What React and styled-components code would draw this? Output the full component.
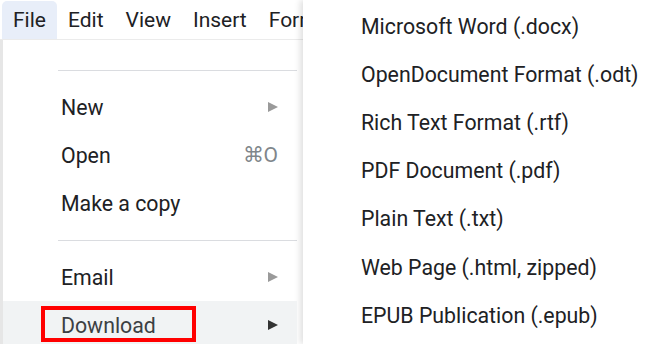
import React from 'react';
import styled, { createGlobalStyle } from 'styled-components';

const GlobalStyle = createGlobalStyle`
    html, body {
        margin: 0;
        padding: 0;
        background: #ffffff;
    }
    body {
        font-family: Roboto, "Liberation Sans", Arial, sans-serif;
        color: #202124;
    }
`;

const Page = styled.div`
    display: flex;
    width: 648px;
    height: 344px;
    overflow: hidden;
`;

const LeftPane = styled.div`
    display: flex;
    flex-direction: column;
    width: 303px;
    flex-shrink: 0;
    min-height: 0;
`;

const MenuBar = styled.div`
    display: flex;
    align-items: flex-end;
    height: 40px;
    flex-shrink: 0;
    padding-left: 2px;
    overflow: hidden;
    white-space: nowrap;
    border-bottom: 1px solid #ebebeb;
    box-sizing: border-box;
`;

const MenuTab = styled.div`
    height: 38px;
    display: flex;
    align-items: center;
    flex-shrink: 0;
    padding: 0 11px;
    font-size: 21px;
    border-radius: 5px 5px 0 0;
    background: ${(p) => (p.$active ? '#e8eef9' : 'transparent')};
`;

const Body = styled.div`
    flex: 1;
    min-height: 0;
    display: flex;
    overflow: hidden;
    border-left: 3px solid #e6e6e6;
`;

const FileMenu = styled.div`
    flex: 1;
    display: flex;
    flex-direction: column;
    padding-top: 18px;
    margin-right: 6px;
    background: #fff;
`;

const Separator = styled.div`
    height: 1px;
    flex-shrink: 0;
    margin: 12px 0 12px 55px;
    background: #dadce0;
`;

const Item = styled.div`
    position: relative;
    display: flex;
    align-items: center;
    height: 48.3px;
    flex-shrink: 0;
    padding: 0 19px 0 58px;
    font-size: 21.3px;
    color: ${(p) => (p.$hover ? '#3c4043' : '#202124')};
    background: ${(p) => (p.$hover ? '#f1f3f4' : 'transparent')};
`;

const Label = styled.span`
    flex: 1;
`;

const Shortcut = styled.span`
    color: #80868b;
    font-size: 21px;
`;

const Arrow = styled.span`
    width: 0;
    height: 0;
    border-top: 5px solid transparent;
    border-bottom: 5px solid transparent;
    border-left: 10px solid ${(p) => (p.$dark ? '#333333' : '#9a9a9a')};
`;

const Highlight = styled.div`
    position: absolute;
    left: 38px;
    top: 5px;
    width: 155px;
    height: 36px;
    border: 4px solid #ff0000;
    box-sizing: border-box;
`;

const SubMenu = styled.div`
    flex: 1;
    display: flex;
    flex-direction: column;
    padding-top: 2px;
    background: #fff;
    box-shadow: -3px 0 6px rgba(0, 0, 0, 0.12);
`;

const SubItem = styled.div`
    display: flex;
    align-items: center;
    flex-shrink: 0;
    height: 48.2px;
    padding-left: 58px;
    font-size: 21.3px;
    color: #202124;
`;

const tabs = ['File', 'Edit', 'View', 'Insert', 'Format'];

const formats = [
    'Microsoft Word (.docx)',
    'OpenDocument Format (.odt)',
    'Rich Text Format (.rtf)',
    'PDF Document (.pdf)',
    'Plain Text (.txt)',
    'Web Page (.html, zipped)',
    'EPUB Publication (.epub)',
];

export default function App() {
    return (
        <Page>
            <GlobalStyle />
            <LeftPane>
                <MenuBar>
                    {tabs.map((t, i) => (
                        <MenuTab key={t} $active={i === 0}>{t}</MenuTab>
                    ))}
                </MenuBar>
                <Body>
                    <FileMenu>
                        <Separator />
                        <Item>
                            <Label>New</Label>
                            <Arrow />
                        </Item>
                        <Item>
                            <Label>Open</Label>
                            <Shortcut>⌘O</Shortcut>
                        </Item>
                        <Item>
                            <Label>Make a copy</Label>
                        </Item>
                        <Separator />
                        <Item>
                            <Label>Email</Label>
                            <Arrow />
                        </Item>
                        <Item $hover>
                            <Label>Download</Label>
                            <Arrow $dark />
                            <Highlight />
                        </Item>
                    </FileMenu>
                </Body>
            </LeftPane>
            <SubMenu>
                {formats.map((f) => (
                    <SubItem key={f}>{f}</SubItem>
                ))}
            </SubMenu>
        </Page>
    );
}
